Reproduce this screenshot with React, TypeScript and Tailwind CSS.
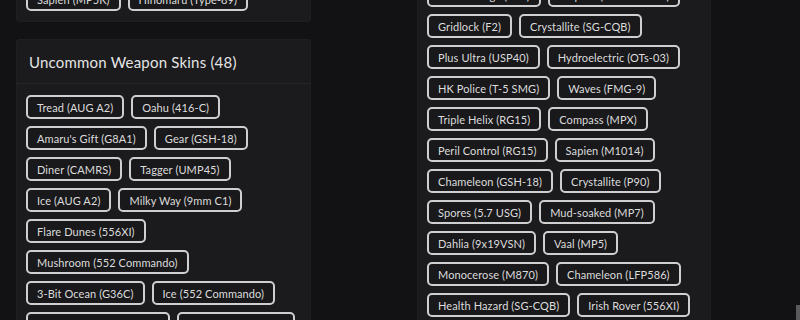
import React from "react";

const topLeft = ["Sapien (MP5K)", "Hinomaru (Type-89)"];

const uncommon = [
  "Tread (AUG A2)",
  "Oahu (416-C)",
  "Amaru's Gift (G8A1)",
  "Gear (GSH-18)",
  "Diner (CAMRS)",
  "Tagger (UMP45)",
  "Ice (AUG A2)",
  "Milky Way (9mm C1)",
  "Flare Dunes (556XI)",
  "Mushroom (552 Commando)",
  "3-Bit Ocean (G36C)",
  "Ice (552 Commando)",
  "Ocean Crystal (M590A1)",
  "Sunburst (SPAS-12)",
];

const rightTags = [
  "Dark Voltage (P12)",
  "Tropical (Mk1 Carbine)",
  "Gridlock (F2)",
  "Crystallite (SG-CQB)",
  "Plus Ultra (USP40)",
  "Hydroelectric (OTs-03)",
  "HK Police (T-5 SMG)",
  "Waves (FMG-9)",
  "Triple Helix (RG15)",
  "Compass (MPX)",
  "Peril Control (RG15)",
  "Sapien (M1014)",
  "Chameleon (GSH-18)",
  "Crystallite (P90)",
  "Spores (5.7 USG)",
  "Mud-soaked (MP7)",
  "Dahlia (9x19VSN)",
  "Vaal (MP5)",
  "Monocerose (M870)",
  "Chameleon (LFP586)",
  "Health Hazard (SG-CQB)",
  "Irish Rover (556XI)",
];

function Tag({ label }: { label: string }) {
  return (
    <div className="h-[24px] flex items-center rounded-[5px] border-2 border-[#cfcfd1] bg-[#19181a] px-[9px] text-[11px] tracking-[0.1px] leading-none text-[#dcdcdc] whitespace-nowrap">
      {label}
    </div>
  );
}

function TagList({ items }: { items: string[] }) {
  return (
    <div className="flex flex-wrap gap-[7px]">
      {items.map((t) => (
        <Tag key={t} label={t} />
      ))}
    </div>
  );
}

export default function App() {
  return (
    <div
      className="relative h-[320px] w-[800px] overflow-hidden bg-[#121114]"
      style={{ fontFamily: 'Lato, "Open Sans", sans-serif' }}
    >
      <div className="flex gap-[106px] pl-4">
        {/* left column */}
        <div className="-mt-[25px] flex w-[295px] flex-col gap-[17px]">
          <div className="rounded-[3px] border border-[#1f1e21] bg-[#1b1a1c] px-[9px] pt-[11px] pb-[10px]">
            <TagList items={topLeft} />
          </div>
          <div className="rounded-[3px] border border-[#1f1e21] bg-[#1b1a1c]">
            <div className="border-b border-[#272629] px-3 pt-[10px] pb-[9px] text-[15px] tracking-[0.2px] leading-[24px] text-[#e4e4e4]">
              Uncommon Weapon Skins (48)
            </div>
            <div className="px-[9px] pt-[11px] pb-3">
              <TagList items={uncommon} />
            </div>
          </div>
        </div>

        {/* right column */}
        <div className="-mt-[19px] w-[294px] self-start rounded-[3px] border border-[#1f1e21] bg-[#1b1a1c] px-[9px] pt-[1px] pb-3">
          <TagList items={rightTags} />
        </div>
      </div>

      <div className="absolute right-0 bottom-0 h-[15px] w-[4px] bg-[#5a595c]" />
    </div>
  );
}
